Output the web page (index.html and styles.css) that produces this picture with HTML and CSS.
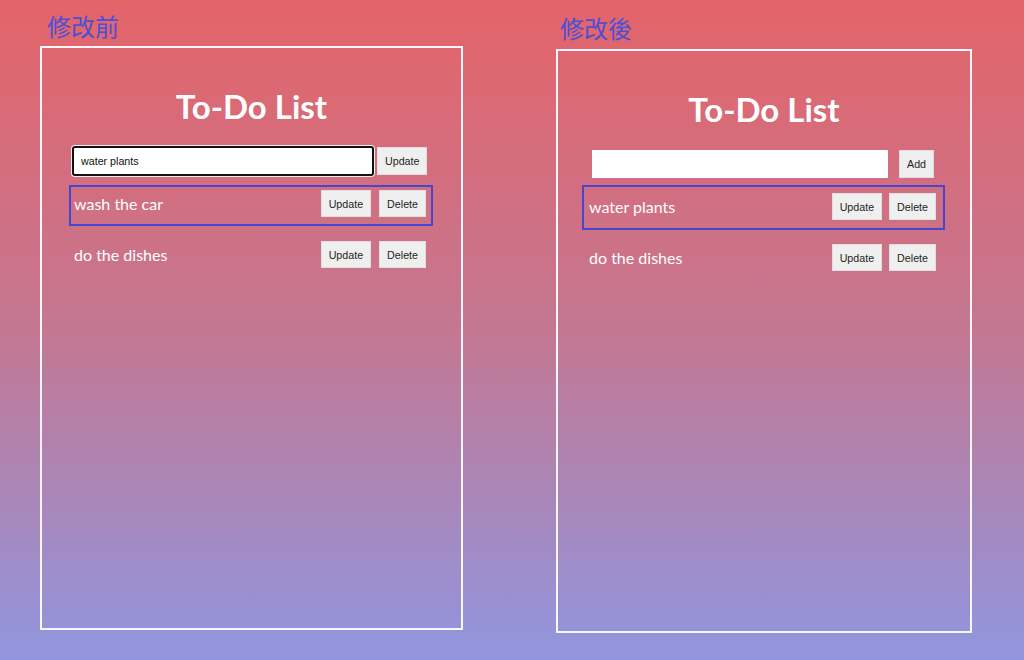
FILE: index.html
```html
<!DOCTYPE html>
<html lang="zh-Hant">
<head>
<meta charset="utf-8">
<title>To-Do List</title>
<link rel="stylesheet" href="styles.css">
</head>
<body>
<div class="page">
  <section class="col col-before">
    <div class="label">修改前</div>
    <div class="panel">
      <h1 class="title">To-Do List</h1>
      <div class="form form-before">
        <input class="field field-focus" type="text" value="water plants">
        <button class="btn btn-side">Update</button>
      </div>
      <div class="row row-before row-hl">
        <span class="task">wash the car</span>
        <div class="actions">
          <button class="btn">Update</button>
          <button class="btn">Delete</button>
        </div>
      </div>
      <div class="row row-before row-next">
        <span class="task">do the dishes</span>
        <div class="actions">
          <button class="btn">Update</button>
          <button class="btn">Delete</button>
        </div>
      </div>
    </div>
  </section>
  <section class="col col-after">
    <div class="label label-after">修改後</div>
    <div class="panel">
      <h1 class="title title-after">To-Do List</h1>
      <div class="form form-after">
        <input class="field field-plain" type="text" value="">
        <button class="btn btn-add">Add</button>
      </div>
      <div class="row row-after row-hl">
        <span class="task">water plants</span>
        <div class="actions actions-after">
          <button class="btn">Update</button>
          <button class="btn">Delete</button>
        </div>
      </div>
      <div class="row row-after row-next-after">
        <span class="task">do the dishes</span>
        <div class="actions actions-after">
          <button class="btn">Update</button>
          <button class="btn">Delete</button>
        </div>
      </div>
    </div>
  </section>
</div>
</body>
</html>
```

FILE: styles.css
```css
html, body {
  margin: 0;
  padding: 0;
  background: #9096df;
}
body {
  font-family: Lato, "Open Sans", sans-serif;
}
.page {
  box-sizing: border-box;
  width: 1024px;
  height: 660px;
  display: flex;
  gap: 93px;
  padding: 14px 0 0 40px;
  background: linear-gradient(180deg, #e46469 0%, #c47792 50%, #9096df 100%);
}
.col-before { width: 423px; }
.col-after { width: 416px; padding-top: 2px; }

.label {
  font-family: "Noto Sans CJK TC", "Noto Sans CJK SC", sans-serif;
  font-size: 24px;
  line-height: 24px;
  height: 24px;
  color: #4b50d6;
  margin: 0 0 8px 7px;
}
.label-after { margin: 0 0 9px 4px; }

.panel {
  box-sizing: border-box;
  height: 584px;
  border: 2px solid #fbf6fb;
  padding-top: 38px;
}
.title {
  margin: 0 0 20px;
  font-family: Lato, sans-serif;
  font-weight: 700;
  font-size: 33px;
  line-height: 40px;
  color: #fff;
  text-align: center;
}
.title-after { margin-bottom: 21px; }

.form {
  display: flex;
  align-items: center;
}
.form-before { margin-left: 30px; }
.form-after { margin-left: 34px; }

.field {
  box-sizing: border-box;
  font-family: "Liberation Sans", Arial, sans-serif;
  font-size: 10.7px;
  color: #111;
  background: #fff;
  outline: none;
}
.field-focus {
  width: 302px;
  height: 30px;
  border: 2px solid #121212;
  border-radius: 3px;
  padding: 0 7px;
  box-shadow: 0 0 0 1px #f4eef0;
}
.field-plain {
  width: 296px;
  height: 28px;
  border: none;
  padding: 0 8px;
}

.btn {
  box-sizing: border-box;
  height: 27px;
  padding: 0 7px;
  border: 1px solid #e2dde0;
  background: #efefef;
  color: #1e1e1e;
  font-family: "Liberation Sans", Arial, sans-serif;
  font-size: 10.7px;
  border-radius: 0;
}
.btn-side { height: 28px; margin-left: 3px; }
.btn-add { height: 28px; margin-left: 11px; padding: 0 7px; }

.row {
  box-sizing: border-box;
  display: flex;
  align-items: center;
  justify-content: space-between;
  border: 2px solid transparent;
}
.row-hl { border-color: #4646d2; }
.row-before {
  width: 364px;
  margin-left: 27px;
  padding: 3px 5px 7px 3px;
}
.form-before + .row-before { margin-top: 9px; }
.row-next { margin-top: 10px; }

.row-after {
  width: 363px;
  margin-left: 24px;
  padding: 6px 7px 8px 5px;
}
.form-after + .row-after { margin-top: 7px; }
.row-next-after { margin-top: 6px; }

.task {
  font-family: Lato, "Open Sans", sans-serif;
  font-size: 16px;
  color: #fff;
}
.actions {
  display: flex;
  gap: 8px;
}
.actions-after { gap: 7px; }
```
